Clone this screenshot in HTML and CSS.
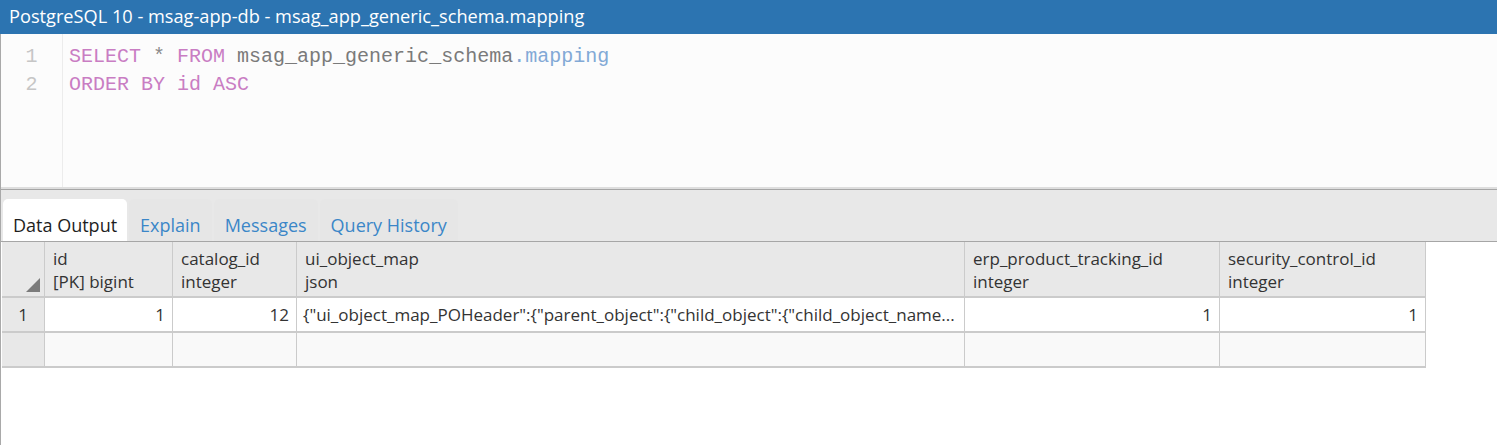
FILE: index.html
```html
<!DOCTYPE html>
<html>
<head>
<meta charset="utf-8">
<link rel="stylesheet" href="styles.css">
</head>
<body>
<div class="app">
  <div class="titlebar">PostgreSQL 10 - msag-app-db - msag_app_generic_schema.mapping</div>
  <div class="editor">
    <div class="gutter">
      <div class="ln">1</div>
      <div class="ln">2</div>
    </div>
    <div class="code">
      <div class="cl"><span class="kw">SELECT</span> <span class="op">*</span> <span class="kw">FROM</span> <span class="id">msag_app_generic_schema</span><span class="prop">.mapping</span></div>
      <div class="cl"><span class="kw">ORDER BY id ASC</span></div>
    </div>
  </div>
  <div class="tabs">
    <div class="tab active">Data Output</div>
    <div class="tab">Explain</div>
    <div class="tab">Messages</div>
    <div class="tab">Query History</div>
  </div>
  <div class="grid">
    <div class="hc corner"><span class="tri"></span></div>
    <div class="hc"><div>id</div><div>[PK] bigint</div></div>
    <div class="hc"><div>catalog_id</div><div>integer</div></div>
    <div class="hc"><div>ui_object_map</div><div>json</div></div>
    <div class="hc"><div>erp_product_tracking_id</div><div>integer</div></div>
    <div class="hc"><div>security_control_id</div><div>integer</div></div>

    <div class="rn">1</div>
    <div class="c num">1</div>
    <div class="c num">12</div>
    <div class="c txt">{"ui_object_map_POHeader":{"parent_object":{"child_object":{"child_object_name...</div>
    <div class="c num">1</div>
    <div class="c num">1</div>

    <div class="rn"></div>
    <div class="c empty"></div>
    <div class="c empty"></div>
    <div class="c empty"></div>
    <div class="c empty"></div>
    <div class="c empty"></div>
  </div>
</div>
</body>
</html>
```

FILE: styles.css
```css
html, body {
  margin: 0;
  padding: 0;
  background: #ffffff;
}
body {
  width: 1497px;
  height: 445px;
  overflow: hidden;
  font-family: "Open Sans", "Noto Sans", sans-serif;
}
.app {
  height: 445px;
  border-left: 1px solid #a9a9a9;
  box-sizing: border-box;
}
.titlebar {
  height: 34px;
  margin-left: -1px;
  background: #2c74b1;
  color: #ffffff;
  font-size: 18.2px;
  line-height: 33px;
  padding-left: 9px;
  white-space: nowrap;
}
.editor {
  display: flex;
  height: 153px;
  background: #fcfcfc;
  border-bottom: 2px solid #dedede;
}
.gutter {
  width: 61px;
  border-right: 1px solid #ececec;
  padding-top: 9px;
}
.ln {
  text-align: center;
  color: #c6c6c6;
  font-family: "Liberation Mono", monospace;
  font-size: 20px;
  line-height: 28px;
}
.code {
  padding-top: 9px;
  padding-left: 6px;
  font-family: "Liberation Mono", monospace;
  font-size: 20px;
  line-height: 28px;
}
.cl {
  white-space: pre;
}
.kw { color: #c97dc3; }
.op { color: #8a8a8a; }
.id { color: #7a7a7a; }
.prop { color: #82a9d6; }
.tabs {
  display: flex;
  align-items: flex-end;
  height: 51px;
  background: #e8e8e8;
  border-top: 1px solid #a6a6a6;
  border-bottom: 1px solid #a6a6a6;
  padding-left: 2px;
  gap: 2px;
}
.tab {
  height: 42px;
  padding: 0 11px;
  font-size: 18px;
  color: #3b86c8;
  background: #e6e6e6;
  border-radius: 5px 5px 0 0;
  box-sizing: border-box;
  line-height: 52px;
}
.tab.active {
  background: #ffffff;
  color: #1e1e1e;
  padding: 0 10px;
}
.grid {
  display: grid;
  grid-template-columns: 43px 128px 124px 668px 255px 206px;
  margin-left: 1px;
  width: 1424px;
  font-size: 17px;
  color: #333333;
}
.hc, .rn, .c {
  border-right: 1px solid #cbcbcb;
  border-bottom: 2px solid #cbcbcb;
  box-sizing: border-box;
}
.hc {
  background: #e8e8e8;
  height: 56px;
  padding: 5px 8px 0 8px;
  line-height: 23px;
  white-space: nowrap;
}
.corner {
  position: relative;
}
.tri {
  position: absolute;
  right: 4px;
  bottom: 4px;
  width: 0;
  height: 0;
  border-left: 14px solid transparent;
  border-bottom: 14px solid #7b7b7b;
}
.rn {
  background: #e8e8e8;
  height: 35px;
  line-height: 33px;
  text-align: center;
}
.c {
  height: 35px;
  line-height: 33px;
  padding: 0 7px 0 6px;
  background: #ffffff;
  white-space: nowrap;
  overflow: hidden;
}
.num { text-align: right; }
.empty { background: #f9f9f9; }
```
